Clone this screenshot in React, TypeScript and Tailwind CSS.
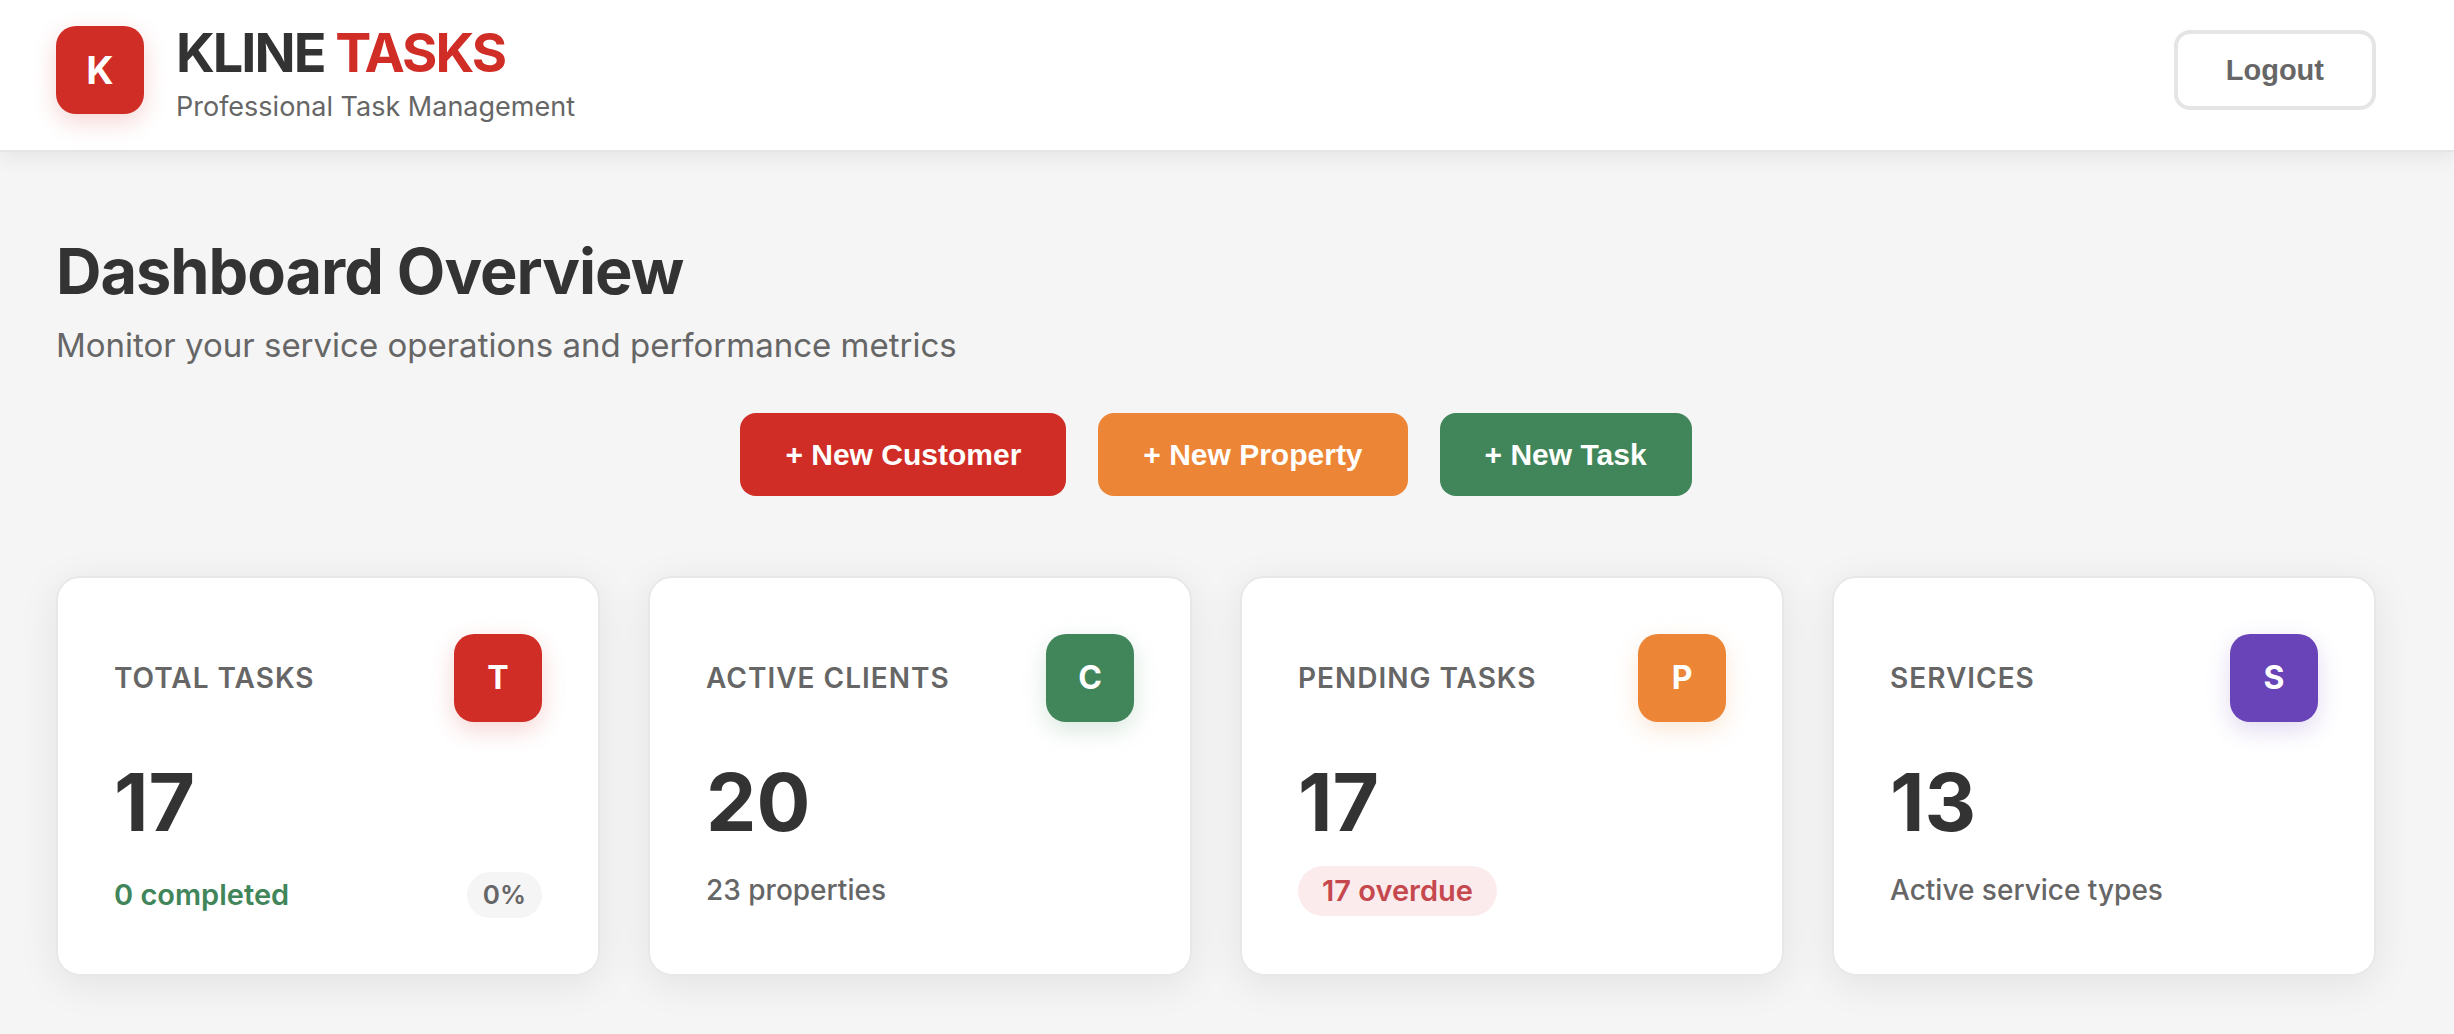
import type { ReactNode } from "react";

type CardProps = {
  label: string;
  letter: string;
  tone: string;
  value: number;
  children: ReactNode;
};

function StatCard({ label, letter, tone, value, children }: CardProps) {
  return (
    <article className="rounded-3xl border-2 border-[#e8e8e8] bg-white p-14 shadow-[0_8px_40px_rgba(0,0,0,0.08)]">
      <div className="mb-10 flex items-center justify-between">
        <h3 className="text-[28px] leading-9 font-semibold tracking-[1px] text-[#666] uppercase">{label}</h3>
        <span
          aria-hidden="true"
          className={`flex size-22 items-center justify-center rounded-[20px] text-[32px] font-bold text-white ${tone}`}
        >
          {letter}
        </span>
      </div>
      <p className="mb-4 text-[80px] leading-[80px] font-bold text-[#333]">{value}</p>
      {children}
    </article>
  );
}

export default function App() {
  return (
    <div className="min-h-screen bg-[#f5f5f5] font-['Inter',sans-serif] text-[#333]">
      <header className="flex items-center justify-between border-b-2 border-[#e5e5e5] bg-white pt-4 pr-[78px] pb-[26px] pl-14 shadow-[0_4px_20px_rgba(0,0,0,0.08)]">
        <div className="flex items-center gap-8">
          <span
            aria-hidden="true"
            className="flex size-22 items-center justify-center rounded-[20px] bg-[#d02d26] text-[38px] font-bold text-white shadow-[0_8px_24px_rgba(208,45,38,0.2)]"
          >
            K
          </span>
          <div>
            <h1 className="text-[54px] leading-[74px] font-bold tracking-[-2px]">
              KLINE <span className="text-[#d02d26]">TASKS</span>
            </h1>
            <p className="text-[27px] leading-[34px] text-[#666]">Professional Task Management</p>
          </div>
        </div>
        <button
          type="button"
          className="rounded-2xl border-4 border-[#e5e5e5] bg-white px-12 py-5 font-['Liberation_Sans',sans-serif] text-[29px] leading-8 font-bold text-[#666]"
        >
          Logout
        </button>
      </header>

      <main className="pt-20 pr-[78px] pb-14 pl-14">
        <h2 className="text-[63px] leading-[78px] font-bold tracking-[-1px]">Dashboard Overview</h2>
        <p className="mt-2 text-[33px] leading-[55px] text-[#666]">
          Monitor your service operations and performance metrics
        </p>

        <div className="mt-10 flex flex-wrap justify-center gap-8 font-['Liberation_Sans',sans-serif] text-[30px] leading-[35px] font-bold text-white">
          <button type="button" className="rounded-2xl bg-[#d02d26] px-[45px] py-6">
            + New Customer
          </button>
          <button type="button" className="rounded-2xl bg-[#ec8636] px-[45px] py-6">
            + New Property
          </button>
          <button type="button" className="rounded-2xl bg-[#41865a] px-[45px] py-6">
            + New Task
          </button>
        </div>

        <section
          aria-label="Statistics"
          className="mt-20 grid grid-cols-[repeat(auto-fit,minmax(480px,1fr))] gap-12"
        >
          <StatCard
            label="Total Tasks"
            letter="T"
            tone="bg-[#d02d26] shadow-[0_8px_24px_rgba(208,45,38,0.2)]"
            value={17}
          >
            <div className="flex items-center justify-between pt-3.5">
              <span className="text-[29px] leading-9 font-semibold text-[#41865a]">0 completed</span>
              <span className="rounded-3xl bg-[#f5f5f5] px-4 py-2 text-[26px] leading-[30px] font-semibold text-[#666]">
                0%
              </span>
            </div>
          </StatCard>
          <StatCard
            label="Active Clients"
            letter="C"
            tone="bg-[#41865a] shadow-[0_8px_24px_rgba(65,134,90,0.2)]"
            value={20}
          >
            <p className="pt-3.5 text-[28px] leading-9 font-medium text-[#666]">23 properties</p>
          </StatCard>
          <StatCard
            label="Pending Tasks"
            letter="P"
            tone="bg-[#ec8636] shadow-[0_8px_24px_rgba(236,134,54,0.2)]"
            value={17}
          >
            <div className="flex pt-2">
              <span className="rounded-full bg-[#fbebec] px-6 py-2 text-[29px] leading-[34px] font-semibold text-[#c6484f]">
                17 overdue
              </span>
            </div>
          </StatCard>
          <StatCard
            label="Services"
            letter="S"
            tone="bg-[#6943b8] shadow-[0_8px_24px_rgba(105,67,184,0.2)]"
            value={13}
          >
            <p className="pt-3.5 text-[28px] leading-9 font-medium text-[#666]">Active service types</p>
          </StatCard>
        </section>
      </main>
    </div>
  );
}
